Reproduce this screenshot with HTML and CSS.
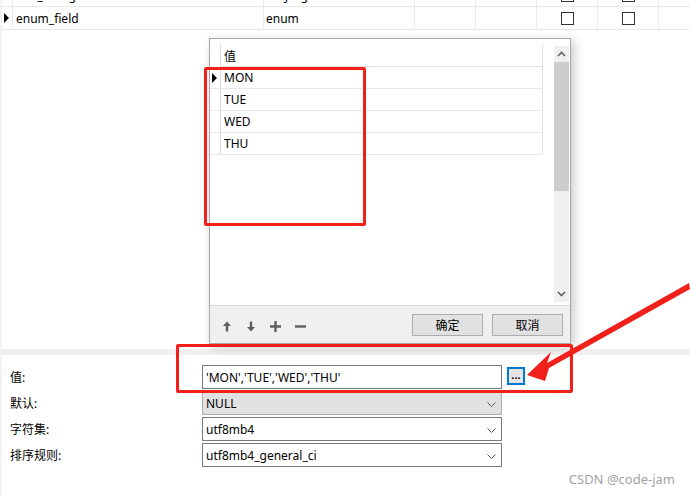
FILE: index.html
```html
<!DOCTYPE html>
<html lang="zh-CN">
<head>
    <meta charset="UTF-8">
    <title>enum 值编辑</title>
    <link rel="stylesheet" href="styles.css">
</head>
<body>
<div class="page">
    <div class="top">
        <div class="trow">
            <div class="cell stub"></div>
            <div class="cell c-name">text_string</div>
            <div class="cell c-type">varying</div>
            <div class="cell c-n"></div>
            <div class="cell c-n"></div>
            <div class="cell c-n"><span class="chk"></span></div>
            <div class="cell c-n"><span class="chk"></span></div>
            <div class="cell c-rest"></div>
        </div>
        <div class="trow">
            <div class="cell stub"><span class="tri"></span></div>
            <div class="cell c-name">enum_field</div>
            <div class="cell c-type">enum</div>
            <div class="cell c-n"></div>
            <div class="cell c-n"></div>
            <div class="cell c-n"><span class="chk"></span></div>
            <div class="cell c-n"><span class="chk"></span></div>
            <div class="cell c-rest"></div>
        </div>
    </div>

    <div class="sep"></div>

    <div class="form">
        <label>值:</label>
        <div class="input">'MON','TUE','WED','THU'</div>
        <div class="dots">...</div>

        <label>默认:</label>
        <div class="input select grey">NULL <svg class="chev" width="9" height="5" viewBox="0 0 9 5"><path d="M0.5 0.5 L4.5 4.5 L8.5 0.5" fill="none" stroke="#555" stroke-width="1"/></svg></div>
        <span></span>

        <label>字符集:</label>
        <div class="input select">utf8mb4 <svg class="chev" width="9" height="5" viewBox="0 0 9 5"><path d="M0.5 0.5 L4.5 4.5 L8.5 0.5" fill="none" stroke="#555" stroke-width="1"/></svg></div>
        <span></span>

        <label>排序规则:</label>
        <div class="input select">utf8mb4_general_ci <svg class="chev" width="9" height="5" viewBox="0 0 9 5"><path d="M0.5 0.5 L4.5 4.5 L8.5 0.5" fill="none" stroke="#555" stroke-width="1"/></svg></div>
        <span></span>
    </div>

    <!-- popup editor -->
    <div class="dialog">
        <div class="dlg-body">
            <div class="list">
                <div class="lrow head"><div class="lstub"></div><div class="lcell">值</div></div>
                <div class="lrow"><div class="lstub"><span class="tri"></span></div><div class="lcell">MON</div></div>
                <div class="lrow"><div class="lstub"></div><div class="lcell">TUE</div></div>
                <div class="lrow"><div class="lstub"></div><div class="lcell">WED</div></div>
                <div class="lrow"><div class="lstub"></div><div class="lcell">THU</div></div>
            </div>
            <div class="vscroll">
                <div class="sarrow"><svg width="9" height="6" viewBox="0 0 9 6"><path d="M1 5 L4.5 1.5 L8 5" fill="none" stroke="#606060" stroke-width="1.6"/></svg></div>
                <div class="thumb"></div>
                <div class="strack"></div>
                <div class="sarrow"><svg width="9" height="6" viewBox="0 0 9 6"><path d="M1 1 L4.5 4.5 L8 1" fill="none" stroke="#606060" stroke-width="1.6"/></svg></div>
            </div>
        </div>
        <div class="dlg-bar">
            <div class="tools">
                <svg width="10" height="11" viewBox="0 0 10 11"><path d="M5 0.5 L9 5 L6.2 5 L6.2 10.5 L3.8 10.5 L3.8 5 L1 5 Z" fill="#5f5f5f"/></svg>
                <svg width="10" height="11" viewBox="0 0 10 11"><path d="M5 10.5 L9 6 L6.2 6 L6.2 0.5 L3.8 0.5 L3.8 6 L1 6 Z" fill="#5f5f5f"/></svg>
                <svg width="11" height="11" viewBox="0 0 11 11"><path d="M4.3 0 H6.7 V4.3 H11 V6.7 H6.7 V11 H4.3 V6.7 H0 V4.3 H4.3 Z" fill="#5f5f5f"/></svg>
                <svg width="11" height="11" viewBox="0 0 11 11"><rect x="0" y="4.3" width="11" height="2.4" fill="#5f5f5f"/></svg>
            </div>
            <div class="btn">确定</div>
            <div class="btn">取消</div>
        </div>
    </div>

    <!-- annotations -->
    <div class="mark mark-list"></div>
    <div class="mark mark-value"></div>
    <svg class="arrow" width="690" height="496" viewBox="0 0 690 496">
        <polygon points="527,375 551,352 547,363 689,283 690,289 549,368 545,381" fill="#f2201a"/>
    </svg>

    <div class="watermark">CSDN @code-jam</div>
</div>
</body>
</html>
```

FILE: styles.css
```css
body {
    margin: 0;
    background: #fff;
    font-family: "Noto Sans", "Noto Sans CJK SC", sans-serif;
    font-size: 12px;
    color: #000;
}
.page {
    position: relative;
    width: 690px;
    height: 496px;
    overflow: hidden;
}

/* field grid at the top */
.top {
    height: 365px;
    margin-top: -16px;
    border-left: 2px solid #f3f3f3;
    box-sizing: border-box;
}
.trow {
    display: flex;
    height: 22px;
    border-bottom: 1px solid #e9e9e9;
}
.trow .cell {
    border-right: 1px solid #ececec;
    display: flex;
    align-items: center;
    padding-left: 2px;
    box-sizing: border-box;
    white-space: nowrap;
}
.stub { width: 11px; padding-left: 1px !important; }
.c-name { width: 251px; padding-left: 3px !important; }
.c-type { width: 151px; }
.c-n { width: 61px; justify-content: center; padding-left: 0 !important; }
.c-rest { flex: 1; border-right: none !important; }
.tri {
    width: 0;
    height: 0;
    border-left: 5px solid #000;
    border-top: 5px solid transparent;
    border-bottom: 5px solid transparent;
    margin-left: 1px;
}
.chk {
    width: 11px;
    height: 11px;
    border: 1px solid #333;
    background: #fff;
}

.sep {
    height: 6px;
    background: #f0f0f0;
}

/* property form */
.form {
    display: grid;
    grid-template-columns: 185px 300px 18px;
    grid-auto-rows: 24px;
    column-gap: 5px;
    row-gap: 2px;
    padding: 10px 0 0 10px;
    border-left: 2px solid #f3f3f3;
    height: 141px;
    box-sizing: border-box;
}
.form label {
    display: flex;
    align-items: center;
    margin-left: -2px;
}
.input {
    border: 1px solid #7a7a7a;
    display: flex;
    align-items: center;
    padding-left: 3px;
    position: relative;
    white-space: nowrap;
}
.input.grey {
    background: #e1e1e1;
    border-color: #adadad;
}
.chev {
    position: absolute;
    right: 5px;
    top: 10px;
}
.dots {
    align-self: start;
    margin-top: 2px;
    width: 18px;
    height: 18px;
    box-sizing: border-box;
    border: 2px solid #0078d7;
    background: #e5e5e5;
    font-size: 11px;
    font-weight: bold;
    line-height: 12px;
    text-align: center;
}

/* popup value editor */
.dialog {
    position: absolute;
    left: 209px;
    top: 38px;
    width: 360px;
    height: 304px;
    border: 1px solid #a7a7a7;
    background: #fff;
    box-shadow: 3px 3px 10px rgba(0, 0, 0, 0.22);
}
.dlg-body {
    display: flex;
    height: 266px;
    padding: 6px 1px 3px 0;
    box-sizing: border-box;
}
.list {
    width: 333px;
    margin-right: 11px;
}
.lrow {
    display: flex;
    height: 22px;
    border-bottom: 1px solid #e8e8e8;
    box-sizing: border-box;
}
.lrow.head {
    border-bottom-color: #dedede;
}
.lrow.head .lstub {
    border-bottom: 1px solid #fff;
    margin-bottom: -1px;
}
.lstub {
    width: 11px;
    border-right: 1px solid #dadada;
    display: flex;
    align-items: center;
    padding-left: 1px;
    box-sizing: border-box;
}
.lcell {
    flex: 1;
    padding-left: 3px;
    display: flex;
    align-items: center;
    border-right: 1px solid #e0e0e0;
}
.vscroll {
    width: 15px;
    margin-top: 1px;
    background: #f0f0f0;
    display: flex;
    flex-direction: column;
}
.sarrow {
    height: 16px;
    display: flex;
    align-items: center;
    justify-content: center;
}
.thumb {
    height: 129px;
    background: #cdcdcd;
}
.strack { flex: 1; }

.dlg-bar {
    height: 38px;
    background: #f0f0f0;
    border-top: 1px solid #dadada;
    box-sizing: border-box;
    display: flex;
    align-items: center;
    padding: 0 7px 0 12px;
}
.tools {
    flex: 1;
    display: flex;
    gap: 14px;
    align-items: center;
    padding-top: 3px;
}
.btn {
    width: 71px;
    height: 22px;
    box-sizing: border-box;
    border: 1px solid #adadad;
    background: #e1e1e1;
    display: flex;
    align-items: center;
    justify-content: center;
    margin-left: 9px;
}

/* red annotations */
.mark {
    position: absolute;
    border: 3px solid #f2201a;
    border-radius: 2px;
    box-sizing: border-box;
}
.mark-list {
    left: 204px;
    top: 67px;
    width: 162px;
    height: 159px;
}
.mark-value {
    left: 176px;
    top: 344px;
    width: 397px;
    height: 49px;
}
.arrow {
    position: absolute;
    left: 0;
    top: 0;
}
.watermark {
    position: absolute;
    right: 15px;
    bottom: 8px;
    color: #a3a3a3;
    font-size: 13px;
    text-shadow: 0 0 1px #fff;
}
```
